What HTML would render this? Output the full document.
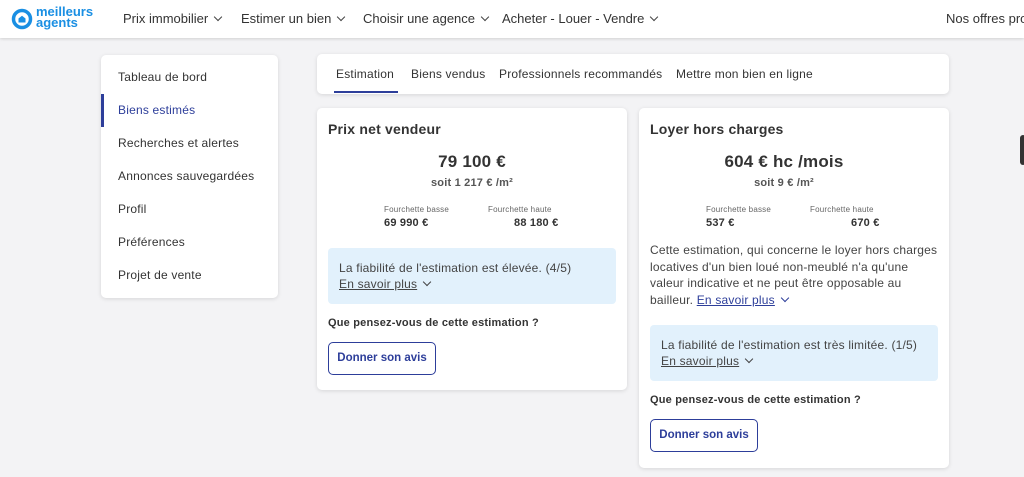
<!DOCTYPE html>
<html><head><meta charset="utf-8"><style>
*{margin:0;padding:0;box-sizing:border-box}
body{width:1024px;height:477px;overflow:hidden;background:#f3f3f5;font-family:"Liberation Sans",sans-serif;color:#333;position:relative;letter-spacing:0.2px}
.hdr{position:absolute;left:0;top:0;width:1024px;height:38px;background:#fff;box-shadow:0 1px 3px rgba(0,0,0,.15)}
.nav{position:absolute;top:11px;font-size:13px;color:#333;white-space:nowrap;letter-spacing:0}
.chev{display:inline-block;width:6px;height:6px;border-right:1.4px solid #444;border-bottom:1.4px solid #444;transform:rotate(45deg);margin-left:7px;position:relative;top:-3px}
.card{position:absolute;background:#fff;border-radius:5px;box-shadow:0 1px 4px rgba(0,0,0,.12)}
.si{position:absolute;left:17px;font-size:12px;color:#333;white-space:nowrap}
.abs{position:absolute;white-space:nowrap}
.blue{color:#2d3e9a}
.tab{position:absolute;top:13px;font-size:12px;color:#333;white-space:nowrap}
.lbl{font-size:8px;color:#666}
.val{font-size:11px;font-weight:bold;color:#333}
.info{position:absolute;background:#e2f1fc;border-radius:4px}
.u{text-decoration:underline}
.btn{position:absolute;border:1px solid #2d3e9a;border-radius:5px;color:#2d3e9a;font-size:11.5px;font-weight:bold;text-align:center;letter-spacing:0}
</style></head><body>
<div class="hdr">
 <svg class="abs" style="left:11px;top:8px" width="22" height="22" viewBox="0 0 22 22"><circle cx="11" cy="11" r="8.5" fill="none" stroke="#1a8fe3" stroke-width="3.5"/><path d="M7.5 14.5V10.5L11 7.8L14.5 10.5V14.5Z" fill="#1a8fe3"/></svg>
 <div class="abs" style="left:36px;top:6px;font-size:13px;line-height:11px;font-weight:bold;color:#1a8fe3;letter-spacing:0">meilleurs<br>agents</div>
 <div class="nav" style="left:123px">Prix immobilier<span class="chev"></span></div>
 <div class="nav" style="left:241px">Estimer un bien<span class="chev"></span></div>
 <div class="nav" style="left:363px">Choisir une agence<span class="chev"></span></div>
 <div class="nav" style="left:502px">Acheter - Louer - Vendre<span class="chev"></span></div>
 <div class="nav" style="left:946px">Nos offres pro</div>
</div>
<div class="abs" style="left:1020px;top:135px;width:6px;height:30px;background:#333;border-radius:3px"></div>

<div class="card" style="left:101px;top:55px;width:177px;height:243px">
 <div class="si" style="top:15px">Tableau de bord</div>
 <div class="abs" style="left:0;top:39px;width:3px;height:33px;background:#2d3e9a"></div>
 <div class="si blue" style="top:48px">Biens estimés</div>
 <div class="si" style="top:81px">Recherches et alertes</div>
 <div class="si" style="top:114px">Annonces sauvegardées</div>
 <div class="si" style="top:147px">Profil</div>
 <div class="si" style="top:180px">Préférences</div>
 <div class="si" style="top:213px">Projet de vente</div>
</div>

<div class="card" style="left:317px;top:54px;width:632px;height:40px">
 <div class="tab blue" style="left:19px">Estimation</div>
 <div class="abs" style="left:17px;top:37px;width:64px;height:2px;background:#2d3e9a"></div>
 <div class="tab" style="left:94px">Biens vendus</div>
 <div class="tab" style="left:182px">Professionnels recommandés</div>
 <div class="tab" style="left:359px">Mettre mon bien en ligne</div>
</div>

<div class="card" style="left:317px;top:108px;width:310px;height:282px">
 <div class="abs" style="left:11px;top:13px;font-size:14px;font-weight:bold">Prix net vendeur</div>
 <div class="abs" style="left:0;width:310px;top:44px;text-align:center;font-size:17px;font-weight:bold">79 100 €</div>
 <div class="abs" style="left:0;width:310px;top:69px;text-align:center;font-size:11px;font-weight:bold;color:#555">soit 1 217 € /m²</div>
 <div class="abs lbl" style="left:67px;top:97px">Fourchette basse</div>
 <div class="abs val" style="left:67px;top:109px">69 990 €</div>
 <div class="abs lbl" style="left:171px;top:97px">Fourchette haute</div>
 <div class="abs val" style="left:197px;top:109px">88 180 €</div>
 <div class="info" style="left:11px;top:140px;width:288px;height:56px">
  <div class="abs" style="left:11px;top:13px;font-size:12px;color:#444">La fiabilité de l'estimation est élevée. (4/5)</div>
  <div class="abs" style="left:11px;top:29px;font-size:12px;color:#444"><span class="u">En savoir plus</span><span class="chev"></span></div>
 </div>
 <div class="abs" style="left:11px;top:209px;font-size:11px;font-weight:bold">Que pensez-vous de cette estimation ?</div>
 <div class="btn" style="left:11px;top:234px;width:108px;height:33px;line-height:31px">Donner son avis</div>
</div>

<div class="card" style="left:639px;top:108px;width:310px;height:360px">
 <div class="abs" style="left:11px;top:13px;font-size:14px;font-weight:bold">Loyer hors charges</div>
 <div class="abs" style="left:0;width:290px;top:44px;text-align:center;font-size:17px;font-weight:bold">604 € hc /mois</div>
 <div class="abs" style="left:0;width:290px;top:69px;text-align:center;font-size:11px;font-weight:bold;color:#555">soit 9 € /m²</div>
 <div class="abs lbl" style="left:67px;top:97px">Fourchette basse</div>
 <div class="abs val" style="left:67px;top:109px">537 €</div>
 <div class="abs lbl" style="left:171px;top:97px">Fourchette haute</div>
 <div class="abs val" style="left:212px;top:109px">670 €</div>
 <div class="abs" style="left:11px;top:134px;font-size:12px;line-height:16.5px;color:#444">Cette estimation, qui concerne le loyer hors charges<br>locatives d'un bien loué non-meublé n'a qu'une<br>valeur indicative et ne peut être opposable au<br>bailleur. <span class="u blue">En savoir plus</span><span class="chev" style="border-color:#2d3e9a"></span></div>
 <div class="info" style="left:11px;top:217px;width:288px;height:56px">
  <div class="abs" style="left:11px;top:13px;font-size:12px;color:#444">La fiabilité de l'estimation est très limitée. (1/5)</div>
  <div class="abs" style="left:11px;top:29px;font-size:12px;color:#444"><span class="u">En savoir plus</span><span class="chev"></span></div>
 </div>
 <div class="abs" style="left:11px;top:286px;font-size:11px;font-weight:bold">Que pensez-vous de cette estimation ?</div>
 <div class="btn" style="left:11px;top:311px;width:108px;height:33px;line-height:31px">Donner son avis</div>
</div>
</body></html>
